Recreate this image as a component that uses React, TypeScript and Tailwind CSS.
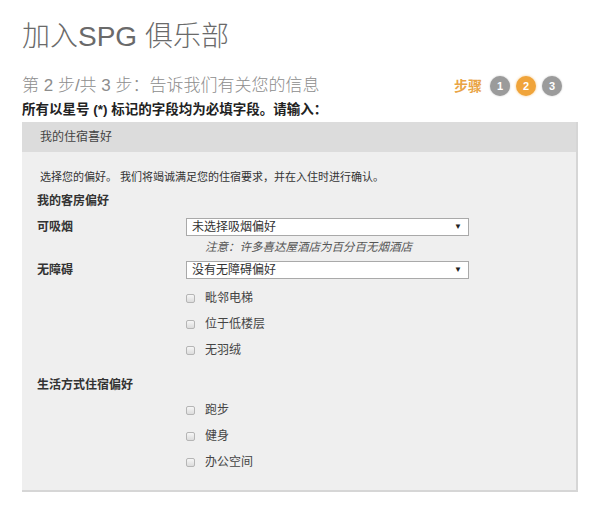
const cjk = { fontFamily: '"Liberation Sans", "Noto Sans CJK SC", sans-serif' };

function StepDot({ n, active }: { n: number; active?: boolean }) {
  return (
    <span
      className={
        'flex h-[20px] w-[20px] items-center justify-center rounded-full text-[11px] font-bold text-white ' +
        (active
          ? 'bg-[#f0a43a] shadow-[0_0_3px_#f5c98a]'
          : 'bg-[#9b9b9b] shadow-[0_0_2px_#bdbdbd]')
      }
    >
      {n}
    </span>
  );
}

function Select({ value }: { value: string }) {
  return (
    <div className="flex h-[18px] w-[283px] items-center justify-between border border-[#a9a9a9] bg-white pl-[5px] pr-[6px] text-[12px] text-[#333]">
      <span>{value}</span>
      <span className="text-[8px] text-[#222]">▼</span>
    </div>
  );
}

function Check({ label }: { label: string }) {
  return (
    <div className="flex h-[26px] items-center pl-[149px]">
      <span className="h-[9px] w-[9px] rounded-[2px] border border-[#b5b5b5] bg-gradient-to-b from-[#f6f6f6] to-[#dcdcdc]" />
      <span className="ml-[10px] text-[12px] text-[#444]">{label}</span>
    </div>
  );
}

export default function App() {
  return (
    <div className="h-[513px] w-[600px] bg-white px-[22px]" style={cjk}>
      <h1 className="pt-[20px] text-[28px] font-light leading-[34px] text-[#6a6a6a]">
        加入SPG 俱乐部
      </h1>

      <div className="mt-[21px] flex h-[22px] items-center justify-between">
        <span className="text-[17px] font-light text-[#8d8d8d]">
          第 2 步/共 3 步：告诉我们有关您的信息
        </span>
        <div className="mr-[16px] flex items-center gap-[6px]">
          <span className="mr-[2px] text-[14px] font-bold text-[#e9a445]">步骤</span>
          <StepDot n={1} />
          <StepDot n={2} active />
          <StepDot n={3} />
        </div>
      </div>

      <p className="mt-[5px] text-[13.5px] font-bold leading-[16px] text-[#222]">
        所有以星号 (*) 标记的字段均为必填字段。请输入：
      </p>

      <section className="mt-[4px] border-b-2 border-r-2 border-[#d6d6d6] bg-[#efefef]">
        <div className="flex h-[30px] items-center bg-[#dcdcdc] pl-[18px] text-[12px] text-[#444]">
          我的住宿喜好
        </div>

        <div className="pl-[15px] pb-[15px] pt-[18px] text-[#333]">
          <p className="pl-[3px] text-[11px] leading-[14px]">
            选择您的偏好。 我们将竭诚满足您的住宿要求，并在入住时进行确认。
          </p>

          <h3 className="mt-[10px] text-[12px] font-bold leading-[14px] text-[#333]">我的客房偏好</h3>

          <div className="mt-[10px] flex items-center">
            <span className="w-[149px] text-[12px] font-bold">可吸烟</span>
            <Select value="未选择吸烟偏好" />
          </div>
          <p className="mt-[4px] pl-[168px] text-[11.5px] italic leading-[14px] text-[#555]">
            注意：许多喜达屋酒店为百分百无烟酒店
          </p>

          <div className="mt-[7px] flex items-center">
            <span className="w-[149px] text-[12px] font-bold">无障碍</span>
            <Select value="没有无障碍偏好" />
          </div>

          <div className="mt-[6px]">
            <Check label="毗邻电梯" />
            <Check label="位于低楼层" />
            <Check label="无羽绒" />
          </div>

          <h3 className="mt-[15px] text-[12px] font-bold leading-[14px]">生活方式住宿偏好</h3>

          <div className="mt-[5px]">
            <Check label="跑步" />
            <Check label="健身" />
            <Check label="办公空间" />
          </div>
        </div>
      </section>
    </div>
  );
}
